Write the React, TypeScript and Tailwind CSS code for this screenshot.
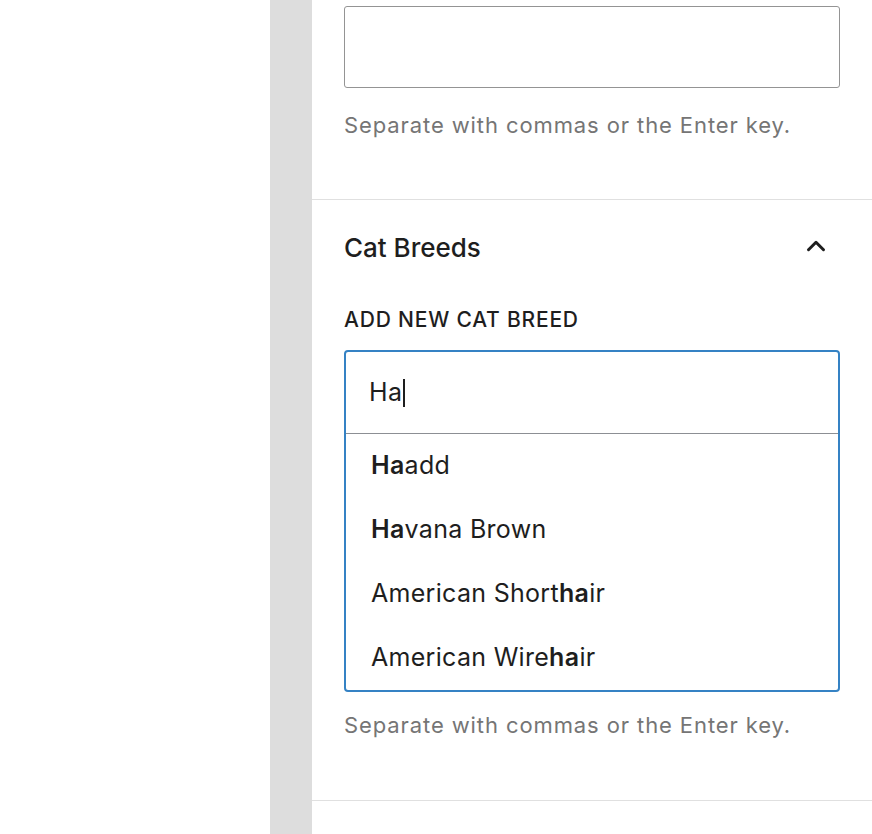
import { ChevronUp } from 'lucide-react'

const suggestions = ['Haadd', 'Havana Brown', 'American Shorthair', 'American Wirehair']

function Highlight({ text, query }: { text: string; query: string }) {
  const idx = text.toLowerCase().indexOf(query.toLowerCase())
  if (idx < 0) return <>{text}</>
  return (
    <>
      {text.slice(0, idx)}
      <strong className="font-semibold">{text.slice(idx, idx + query.length)}</strong>
      {text.slice(idx + query.length)}
    </>
  )
}

export default function App() {
  const query = 'Ha'

  return (
    <div className="flex h-[834px] w-[872px] overflow-hidden bg-white font-['Inter',sans-serif] text-[#1e1e1e]">
      <div className="w-[270px] shrink-0" />
      <div className="w-[42px] shrink-0 bg-[#dddddd]" />

      <div className="flex-1">
        {/* Tags panel (scrolled) */}
        <div className="border-b border-[#e0e0e0] px-8 pt-[6px] pb-[59px]">
          <div className="h-[82px] rounded-[3px] border-[1.5px] border-[#949494]" />
          <p className="mt-[22px] text-[22px] leading-[30px] tracking-[0.9px] text-[#757575]">
            Separate with commas or the Enter key.
          </p>
        </div>

        {/* Cat Breeds panel */}
        <div className="border-b border-[#e0e0e0] px-8 pt-[32px] pb-[60px]">
          <div className="flex items-center justify-between">
            <h2 className="text-[26px] font-medium leading-[32px]">Cat Breeds</h2>
            <ChevronUp className="mr-[9px] -mt-[4px] h-[30px] w-[30px]" strokeWidth={2.4} />
          </div>

          <label className="mt-[42px] block text-[21px] font-medium uppercase leading-[28px] tracking-[0.8px]">
            Add new cat breed
          </label>

          <div className="mt-[16px] rounded-[4px] border-2 border-[#3582c4]">
            <div className="flex h-[82px] items-center border-b-[1.5px] border-[#8c8f94] pl-[23px] pr-6 text-[25px] tracking-[0.3px]">
              <span>{query}</span>
              <span className="ml-[1px] h-[28px] w-[2px] bg-[#1e1e1e]" />
            </div>
            <ul>
              {suggestions.map((s) => (
                <li key={s} className="flex h-[64px] items-center px-[25px] text-[25px] tracking-[0.3px]">
                  <span>
                    <Highlight text={s} query={query} />
                  </span>
                </li>
              ))}
            </ul>
          </div>

          <p className="mt-[18px] text-[22px] leading-[30px] tracking-[0.9px] text-[#757575]">
            Separate with commas or the Enter key.
          </p>
        </div>
      </div>
    </div>
  )
}
